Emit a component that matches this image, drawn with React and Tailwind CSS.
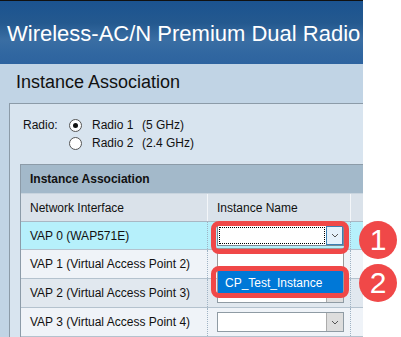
import React from "react";

const Chevron = () => (
  <svg width="8" height="5" viewBox="0 0 8 5">
    <path d="M1 1l3 3 3-3" fill="none" stroke="#555" strokeWidth="1" />
  </svg>
);

function Select({ focused }) {
  if (focused) {
    return (
      <div className="flex h-[21px] w-[127px] border border-[#7a8a96] bg-white">
        <div className="flex-1 p-[1px]">
          <div className="h-full border border-dotted border-black" />
        </div>
        <div className="flex w-[17px] items-center justify-center border border-[#3c7fb1] bg-[#e5f1fb]">
          <Chevron />
        </div>
      </div>
    );
  }
  return (
    <div className="flex h-[20px] w-[127px] border border-[#8f9ba4] bg-white">
      <div className="flex-1" />
      <div className="flex w-[17px] items-center justify-center border-l border-[#acacac] bg-[#dddddd]">
        <Chevron />
      </div>
    </div>
  );
}

function Radio({ checked, label, extra }) {
  return (
    <div className="flex h-[18px] items-center">
      <div className="flex h-[13px] w-[13px] items-center justify-center rounded-full border border-[#555] bg-white">
        {checked && <div className="h-[5px] w-[5px] rounded-full bg-[#111]" />}
      </div>
      <span className="ml-[10px] inline-block w-[50px]">{label}</span>
      <span>{extra}</span>
    </div>
  );
}

function Row({ bg, name, focused, h }) {
  return (
    <div className={`flex border-b border-[#b4c2ce] ${bg} ${h}`}>
      <div className="flex w-[187px] items-center border-r border-dotted border-[#9fb3c4] pl-[9px]">
        {name}
      </div>
      <div className="flex w-[143px] items-center border-r border-dotted border-[#9fb3c4] pl-[9px]">
        <Select focused={focused} />
      </div>
      <div className="flex-1" />
    </div>
  );
}

export default function App() {
  return (
    <div className="relative h-[337px] w-[401px] overflow-hidden bg-white font-['Liberation_Sans',Arial,sans-serif] text-[12px] text-[#111]">
      <div className="flex h-full w-[363px] flex-col overflow-hidden">
        <div className="h-px bg-[#111]" />
        <div className="h-[66px] bg-[linear-gradient(180deg,#1b5390_0%,#24598f_35%,#3a6ea3_62%,#3268a1_80%,#2d639f_100%)] pl-[7px] pt-[20px]">
          <div className="whitespace-nowrap text-[22px] leading-[26px] text-white">
            Wireless-AC/N Premium Dual Radio
          </div>
        </div>
        <div className="flex flex-1 flex-col bg-[#c1d4e5] pl-[9px]">
          <div className="h-[39px] pl-[7px] pt-[8px] text-[18px] leading-[20px] text-[#111]">
            Instance Association
          </div>
          <div className="flex-1 border-l border-t border-[#8c9ba8] bg-[#d8e4ef] pt-[12px]">
            <div className="flex pl-[13px]">
              <div className="h-[18px] w-[46px] leading-[18px]">Radio:</div>
              <div className="flex flex-col">
                <Radio checked label="Radio 1" extra="(5 GHz)" />
                <Radio label="Radio 2" extra="(2.4 GHz)" />
              </div>
            </div>
            <div className="ml-[10px] mt-[12px] w-[360px] border-l border-t border-[#8c9ba8]">
              <div className="flex h-[29px] items-center border-b border-[#c8d4de] bg-[#a3b9ca] pl-[9px] font-bold">
                Instance Association
              </div>
              <div className="flex h-[28px] border-b border-[#a9b7c3] bg-[#dae2ea]">
                <div className="flex w-[187px] items-center border-r border-[#f3f6f9] pl-[9px]">
                  Network Interface
                </div>
                <div className="flex w-[143px] items-center border-r border-[#f3f6f9] pl-[9px]">
                  Instance Name
                </div>
                <div className="flex-1" />
              </div>
              <Row bg="bg-[#b6f0fb]" h="h-[28px]" name="VAP 0 (WAP571E)" focused />
              <Row bg="bg-[#eff3f8]" h="h-[29px]" name="VAP 1 (Virtual Access Point 2)" />
              <Row bg="bg-[#e1e8ef]" h="h-[29px]" name="VAP 2 (Virtual Access Point 3)" />
              <Row bg="bg-[#eff3f8]" h="h-[29px]" name="VAP 3 (Virtual Access Point 4)" />
            </div>
          </div>
        </div>
      </div>

      {/* open dropdown list */}
      <div className="absolute left-[217px] top-[248px] flex h-[48px] w-[127px] flex-col border border-[#9a9a9a] bg-white">
        <div className="h-[22px]" />
        <div className="flex h-[23px] items-center bg-[#0078d7] pl-[7px] text-[12px] text-white">
          CP_Test_Instance
        </div>
      </div>

      {/* red annotation outlines */}
      <div className="absolute left-[211px] top-[221px] h-[33px] w-[138px] rounded-[8px] border-[5px] border-[#f04848]" />
      <div className="absolute left-[211px] top-[266px] h-[32px] w-[138px] rounded-[8px] border-[5px] border-[#f04848]" />

      {/* numbered badges */}
      <div className="absolute left-[359px] top-[221px] flex h-[38px] w-[38px] items-center justify-center rounded-full bg-[#f04848] text-[30px] leading-none text-white">
        1
      </div>
      <div className="absolute left-[359px] top-[264px] flex h-[38px] w-[38px] items-center justify-center rounded-full bg-[#f04848] text-[30px] leading-none text-white">
        2
      </div>
    </div>
  );
}
